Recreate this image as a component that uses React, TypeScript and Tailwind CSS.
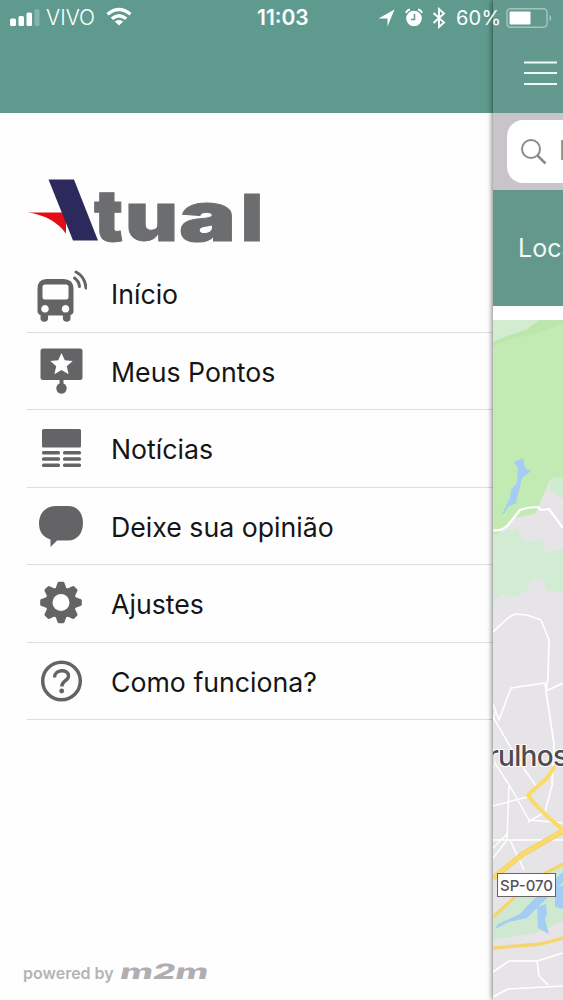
import type { ReactNode } from "react";

type MenuItem = {
  label: string;
  icon: ReactNode;
};

function BusIcon() {
  return (
    <svg width="60" height="60" viewBox="0 0 60 60" fill="#646466">
      <path
        fillRule="evenodd"
        d="M20 17h17q10 0 10 10v22q0 3-3 4v3q0 3.800-3.800 3.800T36.400 56v-2.500H21.600V56q0 3.800-3.800 3.800T14 56v-3q-3-1-3-4V27q0-10 9-10ZM18.500 22.500q-2.500 0-2.500 2.500v10q0 2.500 2.500 2.500h21q2.500 0 2.500-2.500V25q0-2.500-2.500-2.500ZM18.500 43a3.800 3.800 0 1 0 .01 0ZM39 43a3.800 3.800 0 1 0 .01 0Z"
        transform="translate(-.5 -1)"
      />
      <g fill="none" stroke="#646466" strokeWidth="3" strokeLinecap="round">
        <path d="M47.500 15q4.500 3 5 8.500" />
        <path d="M49 9q9 4.500 10 16" />
      </g>
    </svg>
  );
}

function PointsIcon() {
  return (
    <svg width="60" height="60" viewBox="0 0 60 60" fill="#646466">
      <rect x="13.500" y="7.500" width="42" height="31.500" rx="2.500" />
      <path d="M32.500 38h4v4.500a5.300 5.300 0 1 1-4 0Z" />
      <path
        fill="#fff"
        d="m34.500 12 3.300 7.300 7.900.8-5.900 5.200 1.800 8-7.100-4.200-7.100 4.200 1.800-8-5.900-5.200 7.900-.8Z"
      />
    </svg>
  );
}

function NewsIcon() {
  return (
    <svg width="60" height="60" viewBox="0 0 60 60" fill="#646466">
      <rect x="15" y="11" width="39" height="18.500" rx="1.500" />
      {[33, 39.3, 45.600].map((y) => (
        <g key={y}>
          <rect x="15" y={y} width="18" height="3.500" rx="1.500" />
          <rect x="36" y={y} width="18" height="3.500" rx="1.500" />
        </g>
      ))}
    </svg>
  );
}

function ChatIcon() {
  return (
    <svg width="60" height="60" viewBox="0 0 60 60" fill="#646466">
      <path d="M29 10h12c9.500 0 15 7 15 17s-5.500 17.500-15 17.500H30L23.500 51V43.500C16.500 41.500 12 36 12 27.500 12 17 19 10 29 10Z" />
    </svg>
  );
}

function GearIcon() {
  return (
    <svg width="60" height="60" viewBox="0 0 60 60">
      <g fill="#646466" transform="translate(34 29.500)">
        {[0, 45, 90, 135, 180, 225, 270, 315].map((a) => (
          <path
            key={a}
            transform={`rotate(${a})`}
            d="M-5.500-14l2-5.500q.3-1.300 1.500-1.300h4q1.200 0 1.500 1.300l2 5.500Z"
          />
        ))}
        <circle r="15.500" />
        <circle r="8.500" fill="#fff" />
      </g>
    </svg>
  );
}

function HelpIcon() {
  return (
    <svg width="60" height="60" viewBox="0 0 60 60" fill="none" stroke="#646466">
      <circle cx="34.500" cy="30" r="18.800" strokeWidth="3.500" />
      <path d="M27.500 26.500c0-8.500 14-9 14-1.500 0 5-6.700 4.500-6.700 10.500" strokeWidth="3.400" />
      <circle cx="34.700" cy="40" r="2.400" fill="#646466" stroke="none" />
    </svg>
  );
}

const items: MenuItem[] = [
  { label: "Início", icon: <BusIcon /> },
  { label: "Meus Pontos", icon: <PointsIcon /> },
  { label: "Notícias", icon: <NewsIcon /> },
  { label: "Deixe sua opinião", icon: <ChatIcon /> },
  { label: "Ajustes", icon: <GearIcon /> },
  { label: "Como funciona?", icon: <HelpIcon /> },
];

function StatusBar() {
  return (
    <div className="absolute inset-x-0 top-0 z-20 flex h-9 items-center text-white">
      <div className="flex w-[257px] items-center pl-2.5">
        <svg width="30" height="18" viewBox="0 0 30 18" fill="#fff">
          <rect y="9.500" width="6" height="7.500" rx="1.500" />
          <rect x="8.500" y="7" width="5.500" height="10" rx="1.500" />
          <rect x="16.500" y="3.500" width="5.500" height="13.500" rx="1.500" />
          <rect x="24.500" width="5" height="17" rx="1.500" opacity=".25" />
        </svg>
        <span className="ml-1.5 w-[50px] text-[21px] font-light">VIVO</span>
        <svg className="mb-1 ml-2.5" width="26" height="19" viewBox="0 0 26 19">
          <g fill="none" stroke="#fff" strokeWidth="3.300">
            <path d="M1.500 7.200q11.500-9.500 23 0" />
            <path d="M5.800 11.800q7.200-6.200 14.400 0" />
          </g>
          <path d="M8.800 14.500q4.200-3 8.400 0L13 18.500Z" fill="#fff" />
        </svg>
      </div>
      <span className="w-[121px] text-[21px] font-semibold">11:03</span>
      <svg width="18" height="18" viewBox="0 0 18 18" fill="#fff">
        <path d="M16.500.5 9.500 17.500V9.500H.5Z" />
      </svg>
      <svg className="ml-2" width="20" height="20" viewBox="0 0 20 20">
        <circle cx="10" cy="10.500" r="7.800" fill="#fff" />
        <path d="M2 5q1-3 4-3.500M18 5q-1-3-4-3.500" fill="none" stroke="#fff" strokeWidth="1.800" />
        <path d="M10.500 6v5.500H7" fill="none" stroke="#5e9b8e" strokeWidth="1.500" />
      </svg>
      <svg className="ml-2" width="14" height="22" viewBox="0 0 14 22">
        <path
          d="m1.500 6 10.500 9.500L7 20V2l5 4.500L1.500 16"
          fill="none"
          stroke="#fff"
          strokeWidth="1.900"
        />
      </svg>
      <span className="ml-2.5 w-[50px] whitespace-nowrap text-[20px] tracking-[0.2px]">60%</span>
      <svg width="47" height="20" viewBox="0 0 47 20">
        <rect x="1" y=".8" width="40" height="18.500" rx="3.500" fill="none" stroke="#a3c4bd" strokeWidth="1.500" />
        <rect x="3.500" y="3.500" width="21" height="13" rx="1" fill="#fff" />
        <path d="M43.500 6.500q3.500 3.500 0 7Z" fill="#a3c4bd" />
      </svg>
    </div>
  );
}

function Logo() {
  return (
    <svg className="ml-[27px] overflow-visible" width="240" height="66" viewBox="0 0 240 66">
      <path d="M1 32.500h38v21Q26 36 1 32.500Z" fill="#e30c17" />
      <path d="M21.500-.5H47L71 60.500H46Z" fill="#2c2a5c" />
      <text
        y="60.500"
        fill="#6c6d6f"
        stroke="#6c6d6f"
        strokeWidth="1"
        className="font-['Inter','Liberation_Sans',sans-serif] font-black"
      >
        <tspan x="67" fontSize="71" textLength="29" lengthAdjust="spacingAndGlyphs">t</tspan>
        <tspan x="98" fontSize="68" textLength="53" lengthAdjust="spacingAndGlyphs">u</tspan>
        <tspan x="152" fontSize="68" textLength="57" lengthAdjust="spacingAndGlyphs">a</tspan>
        <tspan x="214" fontSize="65" textLength="22" lengthAdjust="spacingAndGlyphs">l</tspan>
      </text>
    </svg>
  );
}

function CityMap() {
  return (
    <svg className="block" width="70" height="680" viewBox="0 0 70 680">
      <rect width="70" height="680" fill="#e6e4e6" />
      <path d="M0 0h70v160l-13 0-15 34-22 4-20 22Z" fill="#c2ebb3" />
      <path d="M0 0h46L33 10 14 16 0 24Z" fill="#d3ecd0" />
      <path d="M46 0h24v4L42 14l-28 6-14 7v-5l14-6 19-6Z" fill="#bbe7ad" />
      <path d="M58 158l12-1v22l-13-9Z" fill="#cfebd0" />
      <path d="M0 215l24-7 8 14 17-2 3 13 18-5v44l-16-1-5-13-12 2-2 9-11 8-14-3-10 8Z" fill="#d1ecd3" />
      <path d="m21 142 9-4 2 10 6 3-9 7-6 25-8 4-4 7H9l8-16 1-8 6-7 1-15Z" fill="#a4ccf5" />
      <path d="M0 598l22-20 48-33v56l-24 11-46 8Z" fill="#cfe9d0" />

      <g fill="none" stroke="#fff" strokeLinejoin="round">
        <path d="M0 210q8 2 15-5l12-15q8-3 18-3l3 3 8-1 14 19" strokeWidth="2.200" />
        <path d="M0 312l15-14 7-4 12 1 14 5 8 20-1 38-2 13 17-8" strokeWidth="1.700" />
        <path d="M0 384l6 16 12-32 34-5 1 8 8 53-2 40" strokeWidth="1.700" />
        <path
          d="M0 397l25 43 18 26M3 390l-3 10M0 440l18 28 18 32 34 3M0 486l34-9M16 465l-2 55-14 18M0 520h70M17 520l14 30M60 462l-8 30-17 10M0 528l14-14"
          strokeWidth="1.500"
        />
        <path d="M0 652l16-11h28l26-8M44 641l2 15 9 9M0 677l15-8 55-3" strokeWidth="1.600" />
      </g>

      <path d="m2 609 3-5 22-10 12-13 31-29v10L42 590l-8 8-18 4Z" fill="#a3cdf2" />
      <path d="m44 587 9-3 1 10-2 6 4 14-11-6Z" fill="#a3cdf2" />
      <path d="M62 568l8-3v24l-8-2Z" fill="#a3cdf2" />

      <g fill="none" strokeLinejoin="round">
        <path d="M0 558l30-24 40-23" stroke="#eed07a" strokeWidth="5.500" />
        <path
          d="M0 558l30-24 40-23M62 446l-8 12-19 17 5 7 16 16 14 12"
          stroke="#fcda68"
          strokeWidth="4"
        />
        <path d="M0 597l22-20 27-22 21-11M0 628l48-4 22-6" stroke="#f7d46d" strokeWidth="3.300" />
      </g>

      <g className="font-['Inter','Liberation_Sans',sans-serif]">
        <text x="-5" y="446" fontSize="28" fontWeight="500" fill="#4d4c50" stroke="#fff" strokeWidth="2" paintOrder="stroke" textLength="80">
          rulhos
        </text>
        <rect x="4.500" y="553.500" width="58" height="23" fill="#fff" stroke="#666468" />
        <text x="7" y="571" fontSize="15" fontWeight="500" fill="#55535a" textLength="53" lengthAdjust="spacingAndGlyphs">
          SP-070
        </text>
      </g>
    </svg>
  );
}

export default function App() {
  return (
    <div className="relative flex h-[1000px] w-[563px] overflow-hidden bg-white font-['Inter','Liberation_Sans',sans-serif]">
      <StatusBar />

      {/* drawer */}
      <aside className="flex w-[493px] shrink-0 flex-col bg-[#fefefe]">
        <div className="h-[113px] shrink-0 bg-[#5e9b8e]" />
        <div className="h-[142px] shrink-0 pt-[67px]">
          <Logo />
        </div>
        <nav className="ml-[27px]">
          {items.map((item) => (
            <a key={item.label} className="flex h-[77.5px] items-center border-b border-[#dedde1]">
              <span className="w-[84px] shrink-0">{item.icon}</span>
              <span className="pt-0.5 text-[26.7px] text-[#151515]">{item.label}</span>
            </a>
          ))}
        </nav>
        <div className="mt-auto mb-[15px] ml-[23px] flex items-center text-[#b5b3b6]">
          <span className="w-[92px] whitespace-nowrap text-[16px] font-semibold">powered by</span>
          <svg className="ml-1 overflow-visible" width="92" height="24" viewBox="0 0 92 24">
            <text
              transform="translate(0 17.500) skewX(-12)"
              fontSize="21"
              textLength="88"
              lengthAdjust="spacingAndGlyphs"
              fill="#b0aeb1"
              className="font-['Inter','Liberation_Sans',sans-serif] font-extrabold"
            >
              m2m
            </text>
          </svg>
        </div>
      </aside>

      {/* page pushed to the side */}
      <main className="relative flex w-[70px] shrink-0 flex-col shadow-[-1px_0_5px_rgba(0,0,0,0.5)]">
        <div className="h-[113px] shrink-0 bg-[#64998f] pt-[61px] pl-[31px]">
          <svg width="33" height="25" viewBox="0 0 33 25" stroke="#eefaf7" strokeWidth="1.800">
            <path d="M0 1.500h33M0 12h33M0 23h33" />
          </svg>
        </div>
        <div className="h-[77px] shrink-0 overflow-hidden bg-[#c8c4c9] pt-[7px] pl-3.5">
          <div className="flex h-[63px] w-[200px] items-center rounded-2xl bg-white pl-3.5">
            <svg width="26" height="26" viewBox="0 0 26 26" fill="none" stroke="#8a898c" strokeWidth="2">
              <circle cx="10" cy="10" r="9" />
              <path d="m16.500 16.500 8 8" strokeWidth="2.500" />
            </svg>
            <span className="ml-3 text-[27px] font-medium text-[#8a898c]">Insira</span>
          </div>
        </div>
        <div className="flex h-[116px] shrink-0 items-center overflow-hidden bg-[#64988c] pt-0.5 pl-[25px]">
          <span className="text-[25px] text-[#eefaf7]">Local</span>
        </div>
        <div className="h-3.5 shrink-0 bg-white" />
        <CityMap />
      </main>
    </div>
  );
}
